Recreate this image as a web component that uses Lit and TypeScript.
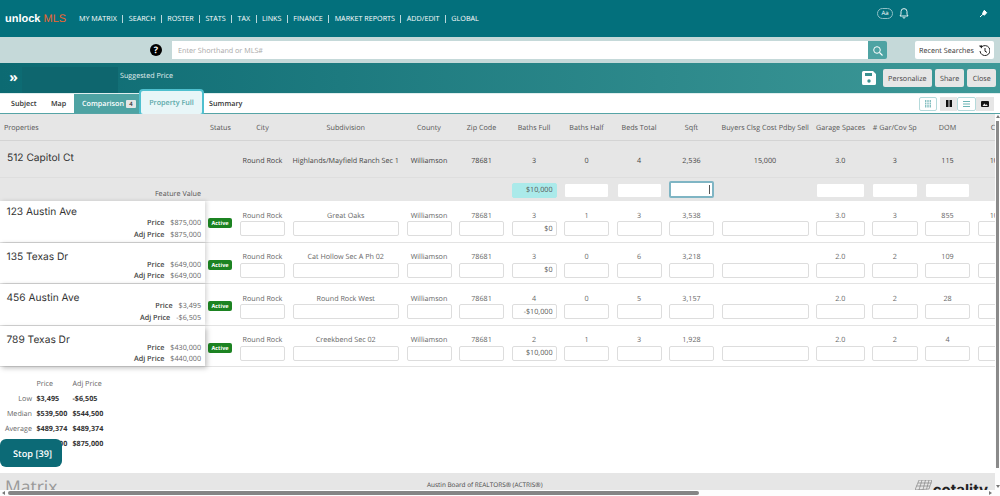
import { LitElement, html, css, svg } from 'lit';
import { customElement } from 'lit/decorators.js';

interface Listing {
  address: string;
  price: string;
  adjPrice: string;
  subdivision: string;
  bathsFull: string;
  bathsHalf: string;
  beds: string;
  sqft: string;
  garage: string;
  garCov: string;
  dom: string;
  closeDate: string;
  adj: string;
}

const NAV = ['MY MATRIX', 'SEARCH', 'ROSTER', 'STATS', 'TAX', 'LINKS', 'FINANCE', 'MARKET REPORTS', 'ADD/EDIT', 'GLOBAL'];

const COLUMNS = ['Status', 'City', 'Subdivision', 'County', 'Zip Code', 'Baths Full', 'Baths Half', 'Beds Total', 'Sqft', 'Buyers Clsg Cost Pdby Sell', 'Garage Spaces', '# Gar/Cov Sp', 'DOM', 'Close Date'];

const LISTINGS: Listing[] = [
  { address: '123 Austin Ave', price: '$875,000', adjPrice: '$875,000', subdivision: 'Great Oaks', bathsFull: '3', bathsHalf: '1', beds: '3', sqft: '3,538', garage: '3.0', garCov: '3', dom: '855', closeDate: '10/15/2024', adj: '$0' },
  { address: '135 Texas Dr', price: '$649,000', adjPrice: '$649,000', subdivision: 'Cat Hollow Sec A Ph 02', bathsFull: '3', bathsHalf: '0', beds: '6', sqft: '3,218', garage: '2.0', garCov: '2', dom: '109', closeDate: '', adj: '$0' },
  { address: '456 Austin Ave', price: '$3,495', adjPrice: '-$6,505', subdivision: 'Round Rock West', bathsFull: '4', bathsHalf: '0', beds: '5', sqft: '3,157', garage: '2.0', garCov: '2', dom: '28', closeDate: '', adj: '-$10,000' },
  { address: '789 Texas Dr', price: '$430,000', adjPrice: '$440,000', subdivision: 'Creekbend Sec 02', bathsFull: '2', bathsHalf: '1', beds: '3', sqft: '1,928', garage: '2.0', garCov: '2', dom: '4', closeDate: '', adj: '$10,000' },
];

const STATS = [
  ['Low', '$3,495', '-$6,505'],
  ['Median', '$539,500', '$544,500'],
  ['Average', '$489,374', '$489,374'],
  ['High', '$875,000', '$875,000'],
];

const bell = svg`<path d="M5 1.600a3 3 0 0 0-3 3v2.600L1 9h8L8 7.200V4.600a3 3 0 0 0-3-3zM4 10.200a1 1 0 0 0 2 0" fill="none" stroke="#fff" stroke-width=".9"/>`;
const pin = svg`<path d="M5.300 1.300l2.400 2.400-2.400 2.600-1.800-1.800zM4 5.200L1 8" fill="#fff" stroke="#fff" stroke-width="1"/>`;
const magnifier = svg`<circle cx="5" cy="5" r="3.300" fill="none" stroke="#fff" stroke-width="1"/><path d="M7.500 7.500l3 3" stroke="#fff" stroke-width="1.100"/>`;
const history = svg`<path d="M3.300 3.200A5 5 0 1 1 2 7" fill="none" stroke="#222" stroke-width="1"/><path d="M0.800 1.800l3.300-.6-.2 3.400z" fill="#222"/><path d="M7 4v3.200l2 1.200" fill="none" stroke="#222" stroke-width="1"/>`;
const floppy = svg`<path d="M1.500 0h9.500l3 3v9.500a1.500 1.500 0 0 1-1.500 1.500h-11A1.500 1.500 0 0 1 0 12.500v-11A1.500 1.500 0 0 1 1.500 0z" fill="#fff"/><rect x="3" y="2" width="7" height="3" fill="#3a9190"/><circle cx="7" cy="10" r="1.700" fill="#3a9190"/>`;

@customElement('app-root')
export class AppRoot extends LitElement {
  static styles = css`
    :host {
      display: flex;
      flex-direction: column;
      position: relative;
      width: 1000px;
      height: 496px;
      overflow: hidden;
      background: #fff;
      color: #555;
      font-family: 'Open Sans', 'Liberation Sans', sans-serif;
      font-size: 7.200px;
      text-rendering: geometricPrecision;
    }
    svg { display: block; }

    /* top nav */
    .topbar {
      height: 37px;
      flex: none;
      display: flex;
      align-items: center;
      padding: 0 12px 0 5px;
      box-sizing: border-box;
      background: #03707c;
      color: #fff;
    }
    .logo {
      width: 74px;
      font-family: 'Liberation Sans', sans-serif;
      font-size: 11px;
      font-weight: 700;
      white-space: nowrap;
    }
    .logo span { color: #f0642f; font-weight: 400; }
    .nav { display: flex; align-items: center; gap: 5.400px; }
    .nav .sep { width: 1px; height: 8px; background: #b9d8dc; }
    .top-tools { margin-left: auto; display: flex; align-items: center; align-self: flex-start; padding-top: 7px; }
    .aa {
      width: 16px;
      height: 11px;
      box-sizing: border-box;
      border: 1px solid #8fc0c6;
      border-radius: 6px;
      font-size: 6px;
      line-height: 9px;
      text-align: center;
    }
    .bell { margin: 0 70px 0 6px; }

    /* search bar */
    .searchbar {
      height: 26px;
      flex: none;
      display: flex;
      align-items: center;
      background: #c5d9d9;
      padding-left: 150px;
    }
    .help {
      width: 12px;
      height: 12px;
      border-radius: 50%;
      background: #000;
      color: #fff;
      font-size: 9px;
      font-weight: 700;
      line-height: 12px;
      text-align: center;
    }
    .search-input {
      width: 696px;
      height: 18px;
      margin-left: 10px;
      padding-left: 6px;
      box-sizing: border-box;
      background: #fff;
      color: #a8a8a8;
      line-height: 20px;
    }
    .search-btn {
      width: 19px;
      height: 18px;
      display: flex;
      align-items: center;
      justify-content: center;
      background: #4ea3a3;
      border-radius: 0 2px 2px 0;
    }
    .recent {
      width: 79px;
      height: 18px;
      margin-left: 28px;
      padding-top: 1px;
      box-sizing: border-box;
      display: flex;
      align-items: center;
      justify-content: center;
      gap: 4px;
      background: #fff;
      border-radius: 2px;
      color: #333;
    }
    .recent svg { margin-top: -1px; }

    /* title bar */
    .titlebar {
      height: 30px;
      flex: none;
      display: flex;
      align-items: center;
      background: linear-gradient(90deg, #0c6a72, #3e9998);
      color: #fff;
    }
    .collapse {
      width: 22px;
      padding-left: 5px;
      box-sizing: border-box;
      text-align: center;
      font-size: 14px;
      font-weight: 700;
      line-height: 30px;
    }
    .collapse-fill { width: 96px; height: 26px; margin-top: 4px; background: #0e666e; }
    .titlebar .name { margin-left: 2px; align-self: flex-start; margin-top: 8px; color: #e4f0f0; }
    .title-actions { margin-left: auto; display: flex; align-items: center; gap: 3px; padding-right: 4px; }
    .title-actions svg { margin-right: 4px; }
    .btn {
      height: 18px;
      padding: 0 5.200px;
      background: #e6e6e6;
      border-radius: 2px;
      color: #444;
      line-height: 20px;
    }

    /* tabs */
    .tabs {
      height: 21px;
      flex: none;
      box-sizing: border-box;
      position: relative;
      display: flex;
      align-items: stretch;
      background: #fff;
      border-top: 1px solid #dfeeee;
      border-bottom: 1px solid #56a4a6;
      font-weight: 600;
      color: #333;
      line-height: 21px;
    }
    .tab { box-sizing: border-box; }
    .tab.subject-tab { width: 44px; padding-left: 11px; }
    .tab.map-tab { width: 30px; padding-left: 7px; }
    .tab.active {
      width: 65px;
      padding: 1px 0 0 8px;
      display: flex;
      align-items: center;
      gap: 2px;
      background: #4ea3a3;
      color: #fff;
    }
    .tab .count { width: 10px; height: 8px; background: #e6e6e6; border-radius: 1px; color: #333; font-size: 6px; line-height: 8px; text-align: center; }
    .tab.focus {
      width: 65px;
      margin: -5px 0 -3px 0;
      background: #e8f6f8;
      border: 2.500px solid #4fc0cf;
      border-radius: 4px;
      color: #5aa8a8;
      line-height: 24px;
      text-align: center;
    }
    .tab.after { padding-left: 5px; }
    .views { margin-left: auto; display: flex; align-items: center; padding-right: 6px; }
    .view {
      width: 18px;
      height: 14px;
      display: flex;
      align-items: center;
      justify-content: center;
      background: #e6e6e6;
    }
    .view.narrow { width: 17px; }
    .view.on { background: #fff; border: 1px solid #b5dadb; border-radius: 2px; box-sizing: border-box; }
    .view.wide { width: 19px; }
    .view.gap { margin-right: 3px; }

    /* comparison table */
    .body { flex: 1; min-height: 0; display: flex; }
    .content { flex: 1; min-width: 0; display: flex; flex-direction: column; overflow: hidden; position: relative; }
    .row {
      display: grid;
      grid-template-columns: 205px 35px 52.500px 114px 52.500px 52.500px 52.500px 52.500px 52.500px 52.500px 94.500px 56px 53px 52.500px 70px;
      width: 1015px;
      flex: none;
      box-sizing: border-box;
    }
    .cell { padding-right: 7.500px; text-align: center; white-space: nowrap; min-width: 0; }
    .cell.status { padding: 0 7px 0 3px; }
    .head { height: 27px; background: #e6e6e6; border-bottom: 1px solid #d4d4d4; line-height: 29px; }
    .head .first { text-align: left; padding-left: 4px; }
    .subject { height: 37px; background: #e6e6e6; border-bottom: 1px solid #dedede; line-height: 40px; color: #444; }
    .subject .addr { padding: 0 0 0 7px; text-align: left; font-family: Inter, sans-serif; font-size: 10.200px; line-height: 35px; color: #333; }
    .feature { height: 23px; background: #e6e6e6; align-items: center; }
    .feature .label { text-align: right; padding-right: 4px; padding-top: 9px; }
    .listing { height: 41.500px; border-bottom: 1px solid #e3e3e3; }
    .listing .val { padding-top: 10.500px; line-height: 9.500px; color: #666; }
    .side {
      background: #fff;
      padding: 8px 4px 0 6.500px;
      box-shadow: 2px 0 4px rgba(0, 0, 0, 0.15);
      position: relative;
      color: #666;
    }
    .row.last .side { box-shadow: 2px 2px 5px rgba(0, 0, 0, 0.25); }
    .side .addr { font-family: Inter, sans-serif; font-size: 10.200px; line-height: 13px; margin-bottom: -4px; color: #333; }
    .row.first .side .addr { margin-top: -3px; margin-bottom: -1px; }
    .price-line { display: flex; justify-content: flex-end; gap: 6px; line-height: 11.500px; }
    .price-line b { font-weight: 600; color: #444; }
    .badge {
      display: block;
      width: 24px;
      height: 10px;
      margin-top: 17px;
      background: #1c8322;
      border-radius: 2px;
      color: #fff;
      font-size: 5.500px;
      font-weight: 700;
      line-height: 10px;
      text-align: center;
    }
    input, .box {
      display: block;
      width: 100%;
      height: 15px;
      margin: 0;
      padding: 0 3px;
      box-sizing: border-box;
      background: #fff;
      border: 1px solid #ddd;
      border-radius: 2px;
      color: #555;
      font: inherit;
      text-align: right;
      text-rendering: geometricPrecision;
      outline: none;
    }
    .feature input { margin-top: 1px; border-color: #e6e6e6; }
    .feature input.money { background: #abeaea; border-color: #abeaea; }
    .feature .box.active { position: relative; margin-top: -1px; height: 17px; border: 2px solid #7fb5c4; }
    .caret { position: absolute; right: 2px; top: 2px; width: 1px; height: 9px; background: #555; }

    /* summary stats */
    .stats {
      flex: none;
      display: grid;
      grid-template-columns: 36.500px 36px auto;
      justify-content: start;
      margin-top: 10px;
      line-height: 15px;
      color: #666;
    }
    .stats .lbl { text-align: right; padding-right: 4.500px; }
    .stats b { font-weight: 700; color: #333; }

    .stop {
      position: absolute;
      left: 0;
      top: 325px;
      width: 62px;
      height: 28px;
      padding-left: 3px;
      box-sizing: border-box;
      background: #0c6a76;
      border-radius: 6px;
      color: #fff;
      font-size: 9.200px;
      font-weight: 600;
      line-height: 30px;
      text-align: center;
    }

    .footer {
      flex: none;
      margin-top: auto;
      height: 17px;
      display: flex;
      align-items: flex-start;
      background: #e6e6e6;
      overflow: hidden;
      padding: 0 7px 0 5px;
      position: relative;
    }
    .matrix { font-size: 17.500px; line-height: 28px; color: #999; width: 422px; flex: none; }
    .board { padding-top: 7px; line-height: 9px; font-size: 6.400px; color: #444; }
    .cotality { margin-left: auto; display: flex; align-items: flex-start; padding-top: 7px; font-family: Inter, sans-serif; font-size: 15px; font-weight: 700; line-height: 18px; color: #222; }
    .cotality svg { margin-right: 1px; }
    .cotality span { margin-top: 1px; }

    /* scrollbars */
    .vbar { width: 5px; flex: none; display: flex; flex-direction: column; background: #fdfdfd; padding-top: 1px; }
    .vbar i { display: block; width: 3.500px; height: 347px; margin: 3px 0 0 .500px; background: #8a8a8a; }
    .arrow-up, .arrow-down { width: 0; height: 0; margin-left: .500px; border-left: 2px solid transparent; border-right: 2px solid transparent; }
    .arrow-up { border-bottom: 3px solid #777; }
    .arrow-down { border-top: 3px solid #777; margin-top: auto; margin-bottom: 2px; }
    .hbar { height: 6px; flex: none; display: flex; align-items: center; background: #fdfdfd; padding: 0 8px 0 2px; box-sizing: border-box; }
    .hbar i { display: block; width: 691px; height: 4px; margin-left: 3px; background: #858585; border-radius: 2px; }
    .arrow-left, .arrow-right { width: 0; height: 0; border-top: 2px solid transparent; border-bottom: 2px solid transparent; }
    .arrow-left { border-right: 3px solid #777; }
    .arrow-right { border-left: 3px solid #777; margin-left: auto; }
  `;

  renderListing(item: Listing, index: number) {
    const first = index === 0;
    const last = index === LISTINGS.length - 1;
    return html`
      <div class="row listing ${first ? 'first' : ''} ${last ? 'last' : ''}">
        <div class="side">
          <div class="addr">${item.address}</div>
          <div class="price-line"><b>Price</b><span>${item.price}</span></div>
          <div class="price-line"><b>Adj Price</b><span>${item.adjPrice}</span></div>
        </div>
        <div class="cell status"><span class="badge">Active</span></div>
        ${this.renderValue('Round Rock')}
        ${this.renderValue(item.subdivision)}
        ${this.renderValue('Williamson')}
        ${this.renderValue('78681')}
        ${this.renderValue(item.bathsFull, item.adj)}
        ${this.renderValue(item.bathsHalf)}
        ${this.renderValue(item.beds)}
        ${this.renderValue(item.sqft)}
        ${this.renderValue('')}
        ${this.renderValue(item.garage)}
        ${this.renderValue(item.garCov)}
        ${this.renderValue(item.dom)}
        ${this.renderValue(item.closeDate)}
      </div>
    `;
  }

  renderValue(text: string, adj = '') {
    return html`<div class="cell val">${text || html`&nbsp;`}<input .value=${adj} readonly /></div>`;
  }

  render() {
    return html`
      <div class="topbar">
        <div class="logo">unlock <span>MLS</span></div>
        <div class="nav">
          ${NAV.map((item, i) => html`${i ? html`<span class="sep"></span>` : ''}<span>${item}</span>`)}
        </div>
        <div class="top-tools">
          <div class="aa">Aa</div>
          <svg class="bell" width="10" height="12" viewBox="0 0 10 12">${bell}</svg>
          <svg width="9" height="9" viewBox="0 0 9 9">${pin}</svg>
        </div>
      </div>

      <div class="searchbar">
        <div class="help">?</div>
        <div class="search-input">Enter Shorthand or MLS#</div>
        <div class="search-btn"><svg width="11" height="11" viewBox="0 0 11 11">${magnifier}</svg></div>
        <div class="recent">Recent Searches <svg width="12" height="12" viewBox="0 0 12 12">${history}</svg></div>
      </div>

      <div class="titlebar">
        <div class="collapse">»</div>
        <div class="collapse-fill"></div>
        <div class="name">Suggested Price</div>
        <div class="title-actions">
          <svg width="14" height="14" viewBox="0 0 14 14">${floppy}</svg>
          <div class="btn">Personalize</div>
          <div class="btn">Share</div>
          <div class="btn">Close</div>
        </div>
      </div>

      <div class="tabs">
        <div class="tab subject-tab">Subject</div>
        <div class="tab map-tab">Map</div>
        <div class="tab active">Comparison <span class="count">4</span></div>
        <div class="tab focus">Property Full</div>
        <div class="tab after">Summary</div>
        <div class="views">
          <div class="view on gap"><svg width="6" height="8" viewBox="0 0 6 8"><path d="M.700 0v8M3 0v8M5.300 0v8" stroke="#7fbcbd" stroke-width="1.300" stroke-dasharray="2 .5"/></svg></div>
          <div class="view narrow"><svg width="6" height="7" viewBox="0 0 6 7"><path d="M0 0h2.500v7H0zM3.500 0H6v7H3.500z" fill="#111"/></svg></div>
          <div class="view on wide"><svg width="7" height="6" viewBox="0 0 7 6"><path d="M0 .500h7M0 3h7M0 5.500h7" stroke="#6db5b5" stroke-width="1"/></svg></div>
          <div class="view"><svg width="8" height="6" viewBox="0 0 8 6"><rect width="8" height="6" rx="1" fill="#111"/><path d="M1.500 5l1.800-2.500 1.500 1.500.8-.8L6.800 5z" fill="#e6e6e6"/></svg></div>
        </div>
      </div>

      <div class="body">
        <div class="content">
          <div class="row head">
            <div class="cell first">Properties</div>
            ${COLUMNS.map((name, i) => html`<div class="cell ${i === 0 ? 'status' : ''}">${name}</div>`)}
          </div>
          <div class="row subject">
            <div class="addr">512 Capitol Ct</div>
            <div class="cell status"></div>
            ${['Round Rock', 'Highlands/Mayfield Ranch Sec 1', 'Williamson', '78681', '3', '0', '4', '2,536', '15,000', '3.0', '3', '115', '10/15/2024'].map(
              (text) => html`<div class="cell">${text}</div>`
            )}
          </div>
          <div class="row feature">
            <div class="label">Feature Value</div>
            <div></div><div></div><div></div><div></div><div></div>
            <div class="cell"><input class="money" .value=${'$10,000'} readonly /></div>
            <div class="cell"><input readonly /></div>
            <div class="cell"><input readonly /></div>
            <div class="cell"><div class="box active"><i class="caret"></i></div></div>
            <div></div>
            <div class="cell"><input readonly /></div>
            <div class="cell"><input readonly /></div>
            <div class="cell"><input readonly /></div>
            <div></div>
          </div>
          ${LISTINGS.map((item, i) => this.renderListing(item, i))}
          <div class="stats">
            <div></div><div>Price</div><div>Adj Price</div>
            ${STATS.map(
              ([label, price, adj]) => html`<div class="lbl">${label}</div><b>${price}</b><b>${adj}</b>`
            )}
          </div>
          <div class="stop">Stop [39]</div>
          <div class="footer">
            <div class="matrix">Matrix</div>
            <div class="board">Austin Board of REALTORS® (ACTRIS®)</div>
            <div class="cotality">
              <svg width="17" height="10" viewBox="0 0 17 10"><path d="M4 0h13l-3 9-14 1zM7 0L4 10M10.500 0L8 9.700M14 0L11.500 9.300M3 3h13.500M1.500 6h13.500" fill="none" stroke="#777" stroke-width=".6"/></svg>
              <span>cotality</span>
            </div>
          </div>
        </div>
        <div class="vbar"><span class="arrow-up"></span><i></i><span class="arrow-down"></span></div>
      </div>
      <div class="hbar"><span class="arrow-left"></span><i></i><span class="arrow-right"></span></div>
    `;
  }
}
